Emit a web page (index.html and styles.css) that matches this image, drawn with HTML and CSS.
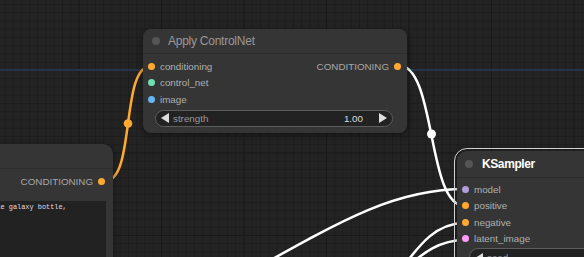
FILE: index.html
```html
<!DOCTYPE html>
<html lang="en">
<head>
    <meta charset="UTF-8">
    <title>ComfyUI graph</title>
    <link rel="stylesheet" href="styles.css">
</head>
<body>
    <div class="canvas">
        <!-- links are drawn below the nodes -->
        <svg class="links" width="584" height="257" viewBox="0 0 584 257">
            <line x1="0" y1="70" x2="584" y2="70" stroke="#26344b" stroke-width="2"/>
            <g fill="none" stroke-width="2.5" stroke-linecap="round">
                <path d="M105 181 C136 181 120 66 151 66" stroke="#ffa931"/>
                <path d="M398 65 C437 65 426 206 465 206" stroke="#fff"/>
                <path d="M190 305 C330 228 385 189 465 189" stroke="#fff"/>
                <path d="M300 330 C400 330 400 223 465 223" stroke="#fff"/>
                <path d="M330 300 C400 300 410 240 465 240" stroke="#fff"/>
            </g>
            <circle cx="128" cy="123.5" r="4.3" fill="#ffa931"/>
            <circle cx="431.5" cy="134" r="4.5" fill="#fff"/>
        </svg>

        <div class="node node-clip">
            <div class="node-title"></div>
            <div class="node-body">
                <div class="slot-row">
                    <span></span>
                    <span class="slot out">CONDITIONING <i class="dot dot-cond"></i></span>
                </div>
                <div class="prompt">beautiful scenery nature glass bottle landscape, , purple galaxy bottle,</div>
            </div>
        </div>

        <div class="node node-cnet">
            <div class="node-title">
                <i class="title-dot"></i>
                <span>Apply ControlNet</span>
            </div>
            <div class="node-body">
                <div class="slot-row">
                    <span class="slot"><i class="dot dot-cond"></i> conditioning</span>
                    <span class="slot out">CONDITIONING <i class="dot dot-cond"></i></span>
                </div>
                <div class="slot-row">
                    <span class="slot"><i class="dot dot-cnet"></i> control_net</span>
                </div>
                <div class="slot-row">
                    <span class="slot"><i class="dot dot-image"></i> image</span>
                </div>
                <div class="widget">
                    <span class="arrow left"></span>
                    <span class="widget-name">strength</span>
                    <span class="widget-value">1.00</span>
                    <span class="arrow right"></span>
                </div>
            </div>
        </div>

        <div class="node node-ksampler selected">
            <div class="node-title">
                <i class="title-dot"></i>
                <span>KSampler</span>
            </div>
            <div class="node-body">
                <div class="slot-row">
                    <span class="slot"><i class="dot dot-model"></i> model</span>
                </div>
                <div class="slot-row">
                    <span class="slot"><i class="dot dot-cond"></i> positive</span>
                </div>
                <div class="slot-row">
                    <span class="slot"><i class="dot dot-cond"></i> negative</span>
                </div>
                <div class="slot-row">
                    <span class="slot"><i class="dot dot-latent"></i> latent_image</span>
                </div>
                <div class="widget">
                    <span class="arrow left"></span>
                    <span class="widget-name">seed</span>
                </div>
            </div>
        </div>
    </div>
</body>
</html>
```

FILE: styles.css
```css
body {
    margin: 0;
    overflow: hidden;
    font-family: "Liberation Sans", Arial, sans-serif;
}
.canvas {
    position: relative;
    width: 584px;
    height: 257px;
    overflow: hidden;
    background-color: #232323;
    background-image:
        linear-gradient(to right, #191919 1px, transparent 1px),
        linear-gradient(to bottom, #191919 1px, transparent 1px),
        linear-gradient(to right, #1d1d1d 1px, transparent 1px),
        linear-gradient(to bottom, #1d1d1d 1px, transparent 1px);
    background-size: 82.5px 82.5px, 82.5px 82.5px, 8.25px 8.25px, 8.25px 8.25px;
    background-position: 78.5px 0, 0 70px, 4.25px 0, 0 4px;
}
.links {
    position: absolute;
    left: 0;
    top: 0;
}

/* nodes sit on a free canvas */
.node {
    position: absolute;
    background: #353535;
    border-radius: 8px;
    box-shadow: 0 2px 6px rgba(0,0,0,0.45);
    color: #aaa;
}
.node-title {
    display: flex;
    align-items: center;
    gap: 8px;
    padding-left: 9px;
    border-bottom: 1px solid #2c2c2c;
    color: #999;
    font-size: 12px;
    letter-spacing: -0.25px;
}
.title-dot {
    width: 8px;
    height: 8px;
    border-radius: 50%;
    background: #555;
}
.slot-row {
    display: flex;
    justify-content: space-between;
    align-items: center;
    height: 16.5px;
}
.slot {
    display: flex;
    align-items: center;
    gap: 5px;
    font-size: 9.8px;
    color: #b0b0b0;
}
.slot.out {
    color: #a8a8a8;
}
.dot {
    width: 7px;
    height: 7px;
    border-radius: 50%;
}
.dot-cond { background: #ffa931; }
.dot-cnet { background: #6ee0b4; }
.dot-image { background: #64b5f6; }
.dot-model { background: #b39ddb; }
.dot-latent { background: #ff9cf9; }

.widget {
    display: flex;
    align-items: center;
    height: 15px;
    border: 1px solid #5c5c5c;
    border-radius: 9px;
    background: #222;
    padding: 0 5px 0 5px;
    font-size: 9.8px;
}
.arrow {
    width: 0;
    height: 0;
    border-top: 5px solid transparent;
    border-bottom: 5px solid transparent;
}
.arrow.left { border-right: 8px solid #ddd; }
.arrow.right { border-left: 8px solid #ddd; }
.widget-name {
    margin-left: 4px;
    color: #999;
    flex: 1;
}
.widget-value {
    color: #ddd;
    margin-right: 16px;
}

/* CLIP text encode, mostly off screen */
.node-clip {
    left: -240px;
    top: 144px;
    width: 353px;
    height: 140px;
    border-radius: 10px;
}
.node-clip .node-title {
    height: 24px;
}
.node-clip .node-body {
    padding: 4px 8px 0 7px;
}
.prompt {
    margin-top: 11px;
    margin-right: -1px;
    height: 80px;
    background: #222;
    padding: 2px 2px;
    font-family: "Liberation Mono", monospace;
    font-size: 6.9px;
    color: #e2dce4;
    white-space: pre;
}

/* Apply ControlNet */
.node-cnet {
    left: 143px;
    top: 29px;
    width: 264px;
    height: 104px;
}
.node-cnet .node-title {
    height: 24px;
}
.node-cnet .node-body {
    padding: 4px 6px 0 5px;
}
.node-cnet .widget {
    margin: 2px 8px 0 7px;
}

/* KSampler, selected */
.node-ksampler {
    left: 457px;
    top: 151px;
    width: 200px;
    height: 140px;
    border-radius: 10px;
}
.node-ksampler.selected {
    outline: 1.5px solid #d0d0d0;
    outline-offset: 2px;
}
.node-ksampler .node-title {
    height: 26px;
    color: #fff;
    font-weight: bold;
    gap: 9px;
    padding-left: 8px;
    letter-spacing: -0.4px;
}
.node-ksampler .node-body {
    padding: 3px 0 0 5px;
}
.node-ksampler .widget {
    margin: 1px 0 0 7px;
    height: 17px;
}
```
